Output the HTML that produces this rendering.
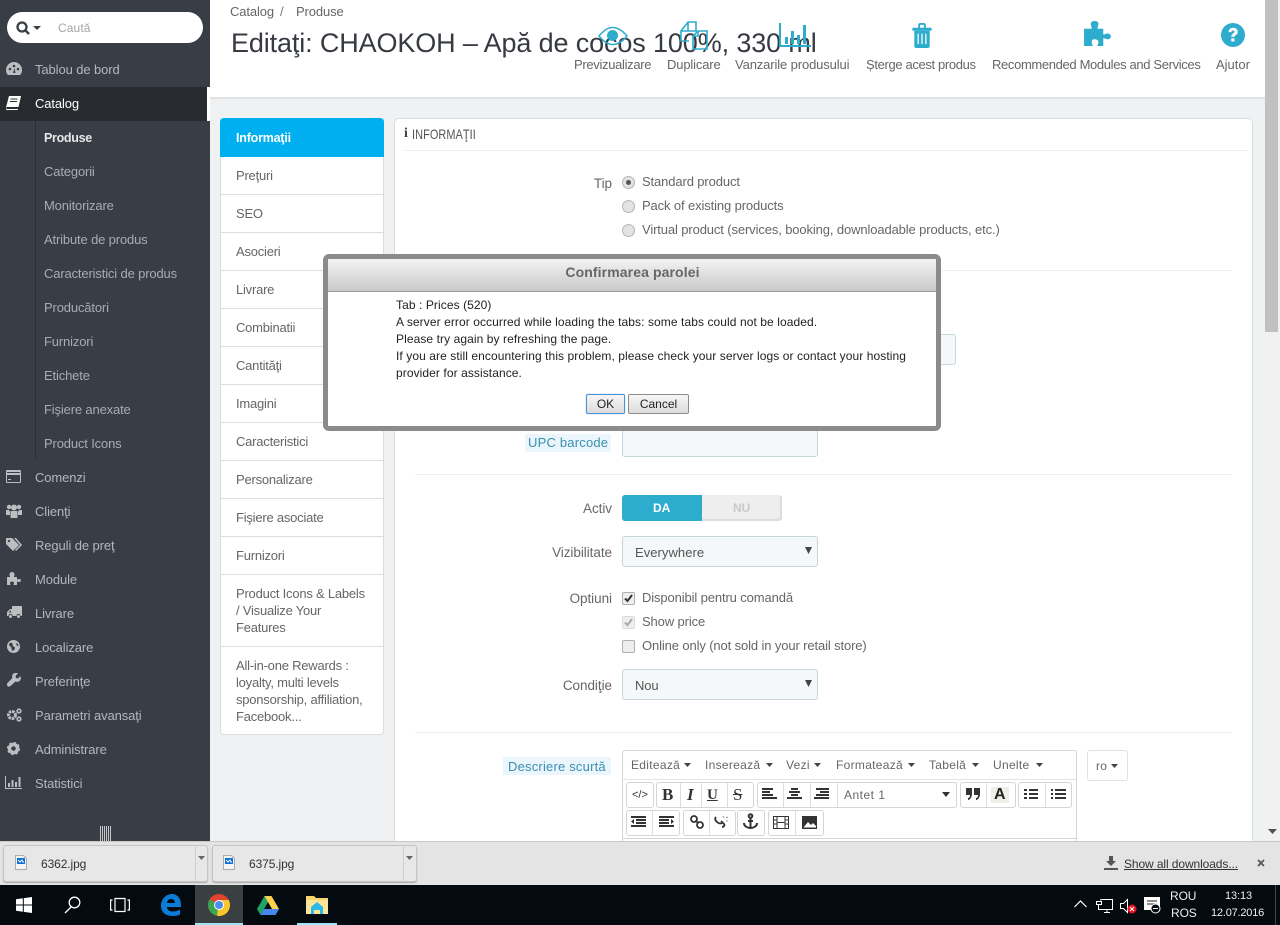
<!DOCTYPE html>
<html lang="ro"><head><meta charset="utf-8"><title>Editați</title>
<style>
html,body{margin:0;padding:0}
body{width:1280px;height:925px;overflow:hidden;position:relative;background:#eff1f2;font:13px/20px "Liberation Sans",sans-serif;color:#555;letter-spacing:-.12px}
div,span,svg{position:absolute}
.t{white-space:nowrap;height:20px}
.s{color:#b4b7bb;left:35px;letter-spacing:-.1px}
.u{color:#a9acb1;left:44px;letter-spacing:-.15px}
.ic{fill:#bcbec2}
.tb{left:236px;color:#666;letter-spacing:-.22px}
.ln{background:#ddd;height:1px}
.lb{color:#666;text-align:right;width:120px;left:492px;font-size:13.5px;letter-spacing:-.05px}
.op{left:642px;color:#666}
.rad{left:622px;width:11px;height:11px;border:1px solid #b5b5b5;border-radius:50%;background:#e3e3e3}
.chk{left:622px;width:11px;height:11px;border:1px solid #b0b0b0;border-radius:2px;background:#eee}
.act{top:55px;color:#666}
.tg{height:24px;border:1px solid #d5d5d5;border-radius:3px;background:#fff}
.sep{width:1px;height:24px;background:#ddd}
.e{font-size:12px;color:#666;letter-spacing:.3px}
.d{color:#222;letter-spacing:.08px;font-size:12px;line-height:17px;left:396px;white-space:nowrap;height:17px}
</style></head><body>

<!-- header -->
<div style="left:210px;top:0;width:1055px;height:99px;background:#fff;border-bottom:2px solid #dfe1e2;box-sizing:border-box"></div>
<div class="t" style="left:230px;top:2px;color:#666">Catalog</div>
<div class="t" style="left:280px;top:2px;color:#777">/</div>
<div class="t" style="left:296px;top:2px;color:#666">Produse</div>
<div class="t" style="left:231px;top:27px;height:32px;font-size:27px;line-height:32px;color:#363a41;letter-spacing:-.13px">Editaţi: CHAOKOH – Apă de cocos 100%, 330 ml</div>

<svg style="left:598px;top:26px" width="30" height="20" viewBox="0 0 30 20"><path d="M1 10C6 4 10 1.500 14.500 1.500S24 4 29 10C24 16 19 18.500 14.500 18.500S6 16 1 10Z" fill="none" stroke="#2eacce" stroke-width="1.600"/><circle cx="14.500" cy="9.500" r="5.500" fill="#2eacce"/></svg>
<svg style="left:680px;top:21px" width="28" height="29" viewBox="0 0 28 29" fill="none" stroke="#2eacce" stroke-width="1.600"><path d="M1 10 8 1h8v9H1v10h8M8 1v9"/><path d="M13 27V15L18 10h9v18H13ZM18 10v5h-5"/></svg>
<svg style="left:779px;top:23px" width="32" height="25" viewBox="0 0 32 25" fill="#2eacce"><path d="M0 0h2v22h30v2H0Z"/><path d="M6 14h3v7H6ZM12 8h3v13h-3ZM18 12h3v9h-3ZM24 2h3v19h-3Z"/></svg>
<svg style="left:911px;top:23px" width="22" height="25" viewBox="0 0 22 26"><path d="M1 5h20v3H1ZM7 5V2c0-1 1-2 2-2h4c1 0 2 1 2 2v3h-2V2H9v3Z" fill="#2eacce"/><path d="M3 8h16v16c0 1-1 2-2 2H5c-1 0-2-1-2-2Z" fill="#2eacce"/><path d="M7 11v11M11 11v11M15 11v11" stroke="#fff" stroke-width="1.300"/></svg>
<svg style="left:1084px;top:21px" width="27" height="25" viewBox="0 0 28 26"><path d="M0 8h8C8 6 7 5 7 3c0-2 2-3 4-3s4 1 4 3c0 2-1 3-1 5h6v6c2 0 3-1 4-1 2 0 4 1 4 3s-2 3-4 3c-1 0-2-1-4-1v8h-6c0-2 1-2 1-4s-2-3-4-3-3 1-3 3 1 2 1 4H0Z" fill="#2eacce"/></svg>
<svg style="left:1221px;top:23px" width="24" height="24" viewBox="0 0 25 25"><circle cx="12.500" cy="12.500" r="12.500" fill="#2eacce"/><path d="M8 9.500C8 6.500 10 5 12.700 5S17.500 6.700 17.500 9.200c0 3.300-3.500 3.300-3.500 5.300h-3.300c0-3.700 3.300-3.700 3.300-5.300 0-.9-.7-1.400-1.500-1.400-1 0-1.600.6-1.800 1.700ZM10.700 16h3.300v3.300h-3.300Z" fill="#fff"/></svg>

<div class="t act" style="left:574px;letter-spacing:-.32px">Previzualizare</div>
<div class="t act" style="left:667px;letter-spacing:-.15px">Duplicare</div>
<div class="t act" style="left:735px;letter-spacing:-.12px">Vanzarile produsului</div>
<div class="t act" style="left:866px;letter-spacing:-.35px">Șterge acest produs</div>
<div class="t act" style="left:992px;letter-spacing:-.35px">Recommended Modules and Services</div>
<div class="t act" style="left:1216px;letter-spacing:0">Ajutor</div>

<!-- sidebar -->
<div style="left:0;top:0;width:210px;height:841px;background:#393d45"></div>
<div style="left:0;top:87px;width:207px;height:34px;background:#282b30"></div>
<div style="left:207px;top:87px;width:3px;height:34px;background:#fff"></div>
<div style="left:35px;top:121px;width:1px;height:339px;background:#2b2e33"></div>
<div style="left:7px;top:12px;width:196px;height:31px;background:#fff;border-radius:16px"></div>
<svg style="left:16px;top:21px" width="26" height="14" viewBox="0 0 26 14"><circle cx="6" cy="6" r="4.500" fill="none" stroke="#3a3e46" stroke-width="2.300"/><path d="M9 9l4 4" stroke="#3a3e46" stroke-width="2.500"/><path d="M17 5h8l-4 4Z" fill="#3a3e46"/></svg>
<div class="t" style="left:58px;top:18px;color:#a5a5a5;font-size:12px;letter-spacing:.1px">Caută</div>

<svg style="left:6px;top:62px" width="16" height="14" viewBox="0 0 16 14"><path class="ic" d="M8 0a8 8 0 0 0-8 8c0 2 .8 4 2 5h12c1.200-1 2-3 2-5a8 8 0 0 0-8-8Z"/><circle cx="4" cy="7" r="1.300" fill="#393d45"/><circle cx="8" cy="4" r="1.300" fill="#393d45"/><circle cx="12" cy="7" r="1.300" fill="#393d45"/><path d="M7 11l1.500-5 1 5Z" fill="#393d45"/></svg>
<div class="t s" style="top:60px">Tablou de bord</div>

<svg style="left:6px;top:96px" width="15" height="14" viewBox="0 0 15 14"><path d="M3 0h12l-2.500 11H1c-1 0-1 2 0 2h11l-.2 1H1c-1 0-1-1-1-2.500Z" fill="#fff"/><path d="M4.500 3h7M4 5.500h7" stroke="#282b30"/></svg>
<div class="t" style="left:35px;top:94px;color:#fff">Catalog</div>

<div class="t u" style="top:128px;color:#e8e8e8;font-weight:bold;font-size:12.500px;letter-spacing:-.3px">Produse</div>
<div class="t u" style="top:162px">Categorii</div>
<div class="t u" style="top:196px">Monitorizare</div>
<div class="t u" style="top:230px">Atribute de produs</div>
<div class="t u" style="top:264px">Caracteristici de produs</div>
<div class="t u" style="top:298px">Producători</div>
<div class="t u" style="top:332px">Furnizori</div>
<div class="t u" style="top:366px">Etichete</div>
<div class="t u" style="top:400px">Fişiere anexate</div>
<div class="t u" style="top:434px">Product Icons</div>

<svg style="left:6px;top:470px" width="15" height="13" viewBox="0 0 15 13"><path class="ic" d="M1 0h13c.6 0 1 .4 1 1v11c0 .6-.4 1-1 1H1c-.6 0-1-.4-1-1V1c0-.6.4-1 1-1Zm0 5v7h13V5ZM1 2v1h13V2ZM2 9h3v1H2Z" fill-rule="evenodd"/></svg>
<div class="t s" style="top:468px">Comenzi</div>
<svg style="left:6px;top:504px" width="16" height="14" viewBox="0 0 16 14"><g class="ic"><circle cx="3" cy="3" r="2.200"/><circle cx="13" cy="3" r="2.200"/><circle cx="8" cy="3.500" r="3"/><path d="M0 6h3l1 2v3H0ZM16 6h-3l-1 2v3h4ZM4.500 7h7V14h-7Z"/></g></svg>
<div class="t s" style="top:502px">Clienţi</div>
<svg style="left:6px;top:538px" width="16" height="14" viewBox="0 0 16 14"><path class="ic" d="M0 0h6l7 7-6 6-7-7Zm8 0h2l6 7-6 6-1-1 5-5Z"/><circle cx="3" cy="3" r="1.100" fill="#393d45"/></svg>
<div class="t s" style="top:536px">Reguli de preţ</div>
<svg style="left:7px;top:572px" width="14" height="13" viewBox="0 0 14 13"><path class="ic" d="M0 5h3c0-1-.5-1.500-.5-2.500S3.500 0 5 0s2.500 1 2.500 2.500S7 4 7 5h3v2.500c1 0 1.200-.5 2-.5s2 .5 2 1.500-1 1.500-2 1.500-1-.5-2-.5V13H6.500c0-1 .5-1 .5-2S6 9.500 5 9.500 3 10 3 11s.5 1 .5 2H0Z"/></svg>
<div class="t s" style="top:570px">Module</div>
<svg style="left:7px;top:606px" width="15" height="13" viewBox="0 0 15 13"><path class="ic" d="M5 0h10v10h-1.500a2 2 0 0 0-4 0H5.500a2 2 0 0 0-4 0H0V6l3-3h2ZM3.500 4.500 1.500 6.500H4V4.500Z"/><circle cx="3.500" cy="10.500" r="1.500" class="ic"/><circle cx="11.500" cy="10.500" r="1.500" class="ic"/></svg>
<div class="t s" style="top:604px">Livrare</div>
<svg style="left:7px;top:640px" width="13" height="13" viewBox="0 0 13 13"><circle class="ic" cx="6.500" cy="6.500" r="6.500"/><path d="M2 4c1-1 2-1.500 3-1 1 1 0 2 1 3s2 1 2 2-1 2-2 3C4 10 5 8 4 7S2 6 2 4ZM9 3l2 1 .5 2-1.500 0Z" fill="#393d45"/></svg>
<div class="t s" style="top:638px">Localizare</div>
<svg style="left:7px;top:673px" width="14" height="14" viewBox="0 0 14 14"><path class="ic" d="M13.500 3 11 5.500 9 5 8.500 3 11 .5C9-.5 7 0 6 1S5 3.500 5.300 5L.5 10c-1 1-.5 2.300 0 3s2 1 3 0L8.500 8.500c1.500.5 3 .5 4.300-.7S14 5 13.500 3Z"/></svg>
<div class="t s" style="top:672px">Preferinţe</div>
<svg style="left:6px;top:708px" width="16" height="14" viewBox="0 0 16 14"><circle cx="6" cy="7" r="3.500" fill="none" stroke="#bcbec2" stroke-width="3" stroke-dasharray="2.500 .8"/><circle cx="13" cy="3" r="1.800" fill="none" stroke="#bcbec2" stroke-width="1.600"/><circle cx="13" cy="11" r="1.800" fill="none" stroke="#bcbec2" stroke-width="1.600"/></svg>
<div class="t s" style="top:706px">Parametri avansaţi</div>
<svg style="left:7px;top:742px" width="13" height="13" viewBox="0 0 13 13"><circle cx="6.500" cy="6.500" r="4" fill="none" stroke="#bcbec2" stroke-width="3.500"/><circle cx="6.500" cy="6.500" r="5.800" fill="none" stroke="#bcbec2" stroke-width="1.600" stroke-dasharray="2.300 2.250"/></svg>
<div class="t s" style="top:740px">Administrare</div>
<svg style="left:5px;top:776px" width="17" height="14" viewBox="0 0 17 14"><path class="ic" d="M0 0h1v12h16v1H0ZM3 7h2v4H3ZM6.500 4h2v7h-2ZM10 6h2v5h-2ZM13.500 1h2v10h-2Z"/></svg>
<div class="t s" style="top:774px">Statistici</div>
<svg style="left:100px;top:826px" width="11" height="15"><path d="M.5 0v15M2.500 0v15M4.500 0v15M6.500 0v15M8.500 0v15M10.500 0v15" stroke="#c6c8cc"/></svg>

<!-- tabs -->
<div style="left:220px;top:118px;width:164px;height:617px;background:#fff;border:1px solid #ddd;border-top:0;box-sizing:border-box;border-radius:0 0 4px 4px"></div>
<div style="left:220px;top:118px;width:164px;height:39px;background:#00aff0;border-radius:4px 4px 0 0"></div>
<div class="t" style="left:236px;top:128px;color:#fff;font-weight:bold;letter-spacing:-.2px;font-size:12.500px">Informaţii</div>
<div class="ln" style="left:221px;top:194px;width:162px"></div>
<div class="ln" style="left:221px;top:232px;width:162px"></div>
<div class="ln" style="left:221px;top:270px;width:162px"></div>
<div class="ln" style="left:221px;top:308px;width:162px"></div>
<div class="ln" style="left:221px;top:346px;width:162px"></div>
<div class="ln" style="left:221px;top:384px;width:162px"></div>
<div class="ln" style="left:221px;top:422px;width:162px"></div>
<div class="ln" style="left:221px;top:460px;width:162px"></div>
<div class="ln" style="left:221px;top:498px;width:162px"></div>
<div class="ln" style="left:221px;top:536px;width:162px"></div>
<div class="ln" style="left:221px;top:574px;width:162px"></div>
<div class="ln" style="left:221px;top:646px;width:162px"></div>
<div class="t tb" style="top:166px">Preţuri</div>
<div class="t tb" style="top:204px">SEO</div>
<div class="t tb" style="top:242px">Asocieri</div>
<div class="t tb" style="top:280px">Livrare</div>
<div class="t tb" style="top:318px">Combinatii</div>
<div class="t tb" style="top:356px">Cantităţi</div>
<div class="t tb" style="top:394px">Imagini</div>
<div class="t tb" style="top:432px">Caracteristici</div>
<div class="t tb" style="top:470px">Personalizare</div>
<div class="t tb" style="top:508px">Fişiere asociate</div>
<div class="t tb" style="top:546px">Furnizori</div>
<div class="t tb" style="top:584px">Product Icons &amp; Labels</div>
<div class="t tb" style="top:601px">/ Visualize Your</div>
<div class="t tb" style="top:618px">Features</div>
<div class="t tb" style="top:656px">All-in-one Rewards :</div>
<div class="t tb" style="top:673px">loyalty, multi levels</div>
<div class="t tb" style="top:690px">sponsorship, affiliation,</div>
<div class="t tb" style="top:707px">Facebook...</div>

<!-- panel -->
<div style="left:394px;top:118px;width:859px;height:740px;background:#fff;border:1px solid #d9dcde;box-sizing:border-box;border-radius:5px 5px 0 0"></div>
<div class="t" style="left:404px;top:124px;font:bold 14px/20px 'Liberation Serif',serif;color:#444">i</div>
<div class="t" style="left:412px;top:124px;font-size:14px;color:#555;letter-spacing:.1px;transform:scaleX(.78);transform-origin:0 50%">INFORMAŢII</div>
<div class="ln" style="left:404px;top:150px;width:844px;background:#eee"></div>

<div class="t lb" style="top:174px">Tip</div>
<div class="rad" style="top:176px"></div><div style="left:626px;top:180px;width:5px;height:5px;border-radius:50%;background:#555"></div>
<div class="rad" style="top:200px"></div>
<div class="rad" style="top:224px"></div>
<div class="t op" style="top:172px">Standard product</div>
<div class="t op" style="top:196px">Pack of existing products</div>
<div class="t op" style="top:220px">Virtual product (services, booking, downloadable products, etc.)</div>
<div class="ln" style="left:415px;top:270px;width:817px;background:#eee"></div>

<div style="left:900px;top:334px;width:56px;height:31px;background:#f5f8f9;border:1px solid #c7d6db;box-sizing:border-box;border-radius:3px"></div>
<div style="left:525px;top:434px;width:86px;height:18px;background:#eaf6fc;border-radius:2px"></div>
<div class="t" style="left:528px;top:433px;color:#3c8fb0;letter-spacing:.2px">UPC barcode</div>
<div style="left:622px;top:428px;width:196px;height:29px;background:#f5f8f9;border:1px solid #c7d6db;box-sizing:border-box;border-radius:3px"></div>
<div class="ln" style="left:415px;top:474px;width:817px;background:#eee"></div>

<div class="t lb" style="top:499px">Activ</div>
<div style="left:622px;top:495px;width:160px;height:26px;background:#eee;border-radius:3px;box-shadow:inset -2px -2px 0 #ddd"></div>
<div style="left:622px;top:495px;width:80px;height:26px;background:#2eacce;border-radius:3px 0 0 3px"></div>
<div class="t" style="left:653px;top:498px;color:#fff;font-weight:bold;font-size:12px;letter-spacing:0">DA</div>
<div class="t" style="left:733px;top:498px;color:#c8c8c8;font-weight:bold;font-size:12px;letter-spacing:0">NU</div>

<div class="t lb" style="top:543px">Vizibilitate</div>
<div style="left:622px;top:536px;width:196px;height:31px;background:#f5f8f9;border:1px solid #c7d6db;box-sizing:border-box;border-radius:3px"></div>
<div class="t" style="left:635px;top:543px;color:#555;letter-spacing:.05px">Everywhere</div>
<svg style="left:805px;top:547px" width="7" height="7"><path d="M0 0h7L3.500 7Z" fill="#444"/></svg>

<div class="t lb" style="top:589px">Optiuni</div>
<div class="chk" style="top:592px"></div>
<svg style="left:623px;top:593px" width="11" height="11"><path d="M2 5.500 4.500 8 9 2" fill="none" stroke="#333" stroke-width="2"/></svg>
<div class="chk" style="top:616px;border-color:#ddd"></div>
<svg style="left:623px;top:617px" width="11" height="11"><path d="M2 5.500 4.500 8 9 2" fill="none" stroke="#aaa" stroke-width="2"/></svg>
<div class="chk" style="top:640px"></div>
<div class="t op" style="top:588px">Disponibil pentru comandă</div>
<div class="t op" style="top:612px">Show price</div>
<div class="t op" style="top:636px">Online only (not sold in your retail store)</div>

<div class="t lb" style="top:676px">Condiţie</div>
<div style="left:622px;top:669px;width:196px;height:31px;background:#f5f8f9;border:1px solid #c7d6db;box-sizing:border-box;border-radius:3px"></div>
<div class="t" style="left:635px;top:676px;color:#555">Nou</div>
<svg style="left:805px;top:680px" width="7" height="7"><path d="M0 0h7L3.500 7Z" fill="#444"/></svg>
<div class="ln" style="left:415px;top:732px;width:817px;background:#eee"></div>

<!-- editor -->
<div style="left:503px;top:757px;width:108px;height:18px;background:#eaf6fc;border-radius:2px"></div>
<div class="t" style="left:508px;top:757px;color:#3c8fb0;letter-spacing:.2px">Descriere scurtă</div>
<div style="left:622px;top:750px;width:455px;height:100px;background:#fff;border:1px solid #d5d5d5;box-sizing:border-box;border-radius:3px 3px 0 0"></div>
<div class="ln" style="left:623px;top:779px;width:453px;background:#e5e5e5"></div>
<div class="ln" style="left:623px;top:838px;width:453px;background:#d5d5d5"></div>
<div class="t e" style="left:631px;top:755px">Editează</div>
<div class="t e" style="left:705px;top:755px">Inserează</div>
<div class="t e" style="left:786px;top:755px">Vezi</div>
<div class="t e" style="left:836px;top:755px">Formatează</div>
<div class="t e" style="left:929px;top:755px">Tabelă</div>
<div class="t e" style="left:993px;top:755px">Unelte</div>
<svg style="left:622px;top:750px" width="430" height="30" fill="#444"><path d="M62 13h7l-3.500 4ZM144 13h7l-3.500 4ZM192 13h7l-3.500 4ZM286 13h7l-3.500 4ZM350 13h7l-3.500 4ZM414 13h7l-3.500 4Z"/></svg>

<div class="tg" style="left:626px;top:782px;width:26px"></div>
<div class="tg" style="left:656px;top:782px;width:96px"></div>
<div class="tg" style="left:757px;top:782px;width:198px"></div>
<div class="tg" style="left:960px;top:782px;width:54px"></div>
<div class="tg" style="left:1018px;top:782px;width:52px"></div>
<div class="tg" style="left:626px;top:810px;width:52px"></div>
<div class="tg" style="left:683px;top:810px;width:51px"></div>
<div class="tg" style="left:737px;top:810px;width:26px"></div>
<div class="tg" style="left:768px;top:810px;width:54px"></div>
<div class="sep" style="left:680px;top:783px"></div><div class="sep" style="left:701px;top:783px"></div><div class="sep" style="left:727px;top:783px"></div>
<div class="sep" style="left:783px;top:783px"></div><div class="sep" style="left:810px;top:783px"></div><div class="sep" style="left:837px;top:783px"></div>
<div class="sep" style="left:986px;top:783px"></div><div class="sep" style="left:1045px;top:783px"></div>
<div class="sep" style="left:652px;top:811px"></div><div class="sep" style="left:709px;top:811px"></div><div class="sep" style="left:795px;top:811px"></div>

<div class="t" style="left:632px;top:785px;font-size:11px;color:#333;letter-spacing:0">&lt;/&gt;</div>
<div class="t" style="left:662px;top:785px;font:bold 17px/20px 'Liberation Serif',serif;color:#333">B</div>
<div class="t" style="left:687px;top:785px;font:italic bold 17px/20px 'Liberation Serif',serif;color:#333">I</div>
<div class="t" style="left:707px;top:785px;font:bold 15px/20px 'Liberation Serif',serif;color:#333;text-decoration:underline">U</div>
<div class="t" style="left:733px;top:785px;font:17px/20px 'Liberation Serif',serif;color:#333;text-decoration:line-through">S</div>
<svg style="left:760px;top:787px" width="72" height="14" stroke="#333" stroke-width="2"><path d="M2 2h11M2 5h8M2 8h11M2 11h15"/><path d="M31 2h7M29 5h11M31 8h7M27 11h15"/><path d="M56 2h13M60 5h9M56 8h13M54 11h15"/></svg>
<div class="t e" style="left:844px;top:785px;letter-spacing:.5px">Antet 1</div>
<svg style="left:942px;top:792px" width="8" height="5"><path d="M0 0h8L4 5Z" fill="#333"/></svg>
<svg style="left:966px;top:788px" width="15" height="13" fill="#333"><path d="M0 0h6v6c0 3-2 6-4 6v-2c1 0 2-1 2-3H0ZM8 0h6v6c0 3-2 6-4 6v-2c1 0 2-1 2-3H8Z"/></svg>
<div style="left:991px;top:787px;width:18px;height:16px;background:#eef0e8"></div>
<div class="t" style="left:994px;top:785px;font-size:16px;font-weight:bold;color:#222;letter-spacing:0">A</div>
<svg style="left:1023px;top:787px" width="46" height="14" stroke="#333" stroke-width="2"><path d="M1 3h3M6 3h9M1 7h3M6 7h9M1 11h3M6 11h9M28 3h2M32 3h11M28 7h2M32 7h11M28 11h2M32 11h11"/></svg>
<svg style="left:630px;top:815px" width="46" height="14" stroke="#333" stroke-width="2"><path d="M1 2h15M6 5h10M6 8h10M1 11h15M29 2h15M29 5h10M29 8h10M29 11h15"/><path d="M4 4v5L1 6.500ZM41 4v5l3-2.500Z" fill="#333" stroke="none"/></svg>
<svg style="left:687px;top:814px" width="44" height="16" fill="none" stroke="#333" stroke-width="1.800"><circle cx="7" cy="5" r="3"/><circle cx="13" cy="11" r="3"/><path d="M8.500 6.500l3 3"/><path d="M29 3c-2 2 0 4 1 5s3 2 5 1M35 13c2 0 3-2 2-3l-3-3" /><path d="M36 2l1 2M39 4l2-1M39 7h2" stroke="#999" stroke-width="1"/></svg>
<svg style="left:743px;top:813px" width="15" height="17" fill="none" stroke="#333" stroke-width="2"><circle cx="7.500" cy="3" r="1.800"/><path d="M7.500 5v10M5 8h5M1 10c0 3 3 5 6.500 5s6.500-2 6.500-5"/></svg>
<svg style="left:773px;top:815px" width="44" height="15"><path d="M.5 1.500h15v12H.5ZM4 1.500v12M12 1.500v12M.5 5h3.500M.5 9h3.500M12 5h3.500M12 9h3.500M4 7.500h8" fill="none" stroke="#333"/><path d="M29 1h15v13H29Z" fill="#333"/><path d="M30.500 12.500 35 7l3 3 2-2 3 3v1.500Z" fill="#fff"/></svg>

<div style="left:1087px;top:750px;width:41px;height:31px;background:#fff;border:1px solid #e2e2e2;box-sizing:border-box;border-radius:3px"></div>
<div class="t e" style="left:1096px;top:756px">ro</div>
<svg style="left:1111px;top:764px" width="7" height="4"><path d="M0 0h7L3.500 4Z" fill="#444"/></svg>

<!-- scrollbar -->
<div style="left:1265px;top:0;width:15px;height:841px;background:#f1f1f1"></div>
<div style="left:1265px;top:0;width:13px;height:332px;background:#c1c1c1"></div>
<svg style="left:1268px;top:829px" width="9" height="6"><path d="M0 0h9L4.500 5Z" fill="#505050"/></svg>

<!-- dialog -->
<div style="left:323px;top:254px;width:618px;height:177px;box-sizing:border-box;background:#fff;border:5px solid #8b8b8b;border-radius:6px"></div>
<div style="left:328px;top:259px;width:608px;height:33px;box-sizing:border-box;background:linear-gradient(#f3f3f3,#c9c9c9);border-bottom:1px solid #9c9c9c"></div>
<div class="t" style="left:328px;width:609px;top:262px;text-align:center;font-weight:bold;font-size:14px;color:#666;letter-spacing:.1px">Confirmarea parolei</div>
<div class="d" style="top:297px">Tab : Prices (520)</div>
<div class="d" style="top:314px">A server error occurred while loading the tabs: some tabs could not be loaded.</div>
<div class="d" style="top:331px">Please try again by refreshing the page.</div>
<div class="d" style="top:348px">If you are still encountering this problem, please check your server logs or contact your hosting</div>
<div class="d" style="top:365px">provider for assistance.</div>
<div style="left:586px;top:394px;width:39px;height:20px;box-sizing:border-box;background:linear-gradient(#f6f6f6,#dcdcdc);border:1px solid #4d90d8;border-radius:2px;box-shadow:0 0 1px #6ba8e8;text-align:center;font-size:12px;line-height:18px;color:#222;letter-spacing:0">OK</div>
<div style="left:628px;top:394px;width:61px;height:20px;box-sizing:border-box;background:linear-gradient(#f6f6f6,#dcdcdc);border:1px solid #8c8c8c;border-radius:2px;text-align:center;font-size:12px;line-height:18px;color:#222;letter-spacing:0">Cancel</div>

<!-- download bar -->
<div style="left:0;top:841px;width:1280px;height:44px;background:#e4e4e4;border-top:1px solid #c8c8c8;box-sizing:border-box"></div>
<div style="left:3px;top:845px;width:205px;height:37px;box-sizing:border-box;background:#e7e7e7;border:1px solid #c4c4c4;border-radius:3px;box-shadow:0 1px 1px #aaa"></div>
<div style="left:195px;top:846px;width:1px;height:35px;background:#cfcfcf"></div>
<div style="left:212px;top:845px;width:205px;height:37px;box-sizing:border-box;background:#e7e7e7;border:1px solid #c4c4c4;border-radius:3px;box-shadow:0 1px 1px #aaa"></div>
<div style="left:403px;top:846px;width:1px;height:35px;background:#cfcfcf"></div>
<svg style="left:15px;top:855px" width="12" height="15"><path d="M.5.500h8l3 3v11H.5Z" fill="#f5f5f5" stroke="#aaa"/><path d="M2 3h8v6H2Z" fill="#0a6fd6"/><path d="M3 5l2 2 2-2 1 2h1" stroke="#fff" fill="none"/></svg>
<svg style="left:223px;top:855px" width="12" height="15"><path d="M.5.500h8l3 3v11H.5Z" fill="#f5f5f5" stroke="#aaa"/><path d="M2 3h8v6H2Z" fill="#0a6fd6"/><path d="M3 5l2 2 2-2 1 2h1" stroke="#fff" fill="none"/></svg>
<div class="t" style="left:41px;top:854px;color:#333;font-size:12px;letter-spacing:-.1px">6362.jpg</div>
<div class="t" style="left:249px;top:854px;color:#333;font-size:12px;letter-spacing:-.1px">6375.jpg</div>
<svg style="left:198px;top:856px" width="7" height="4"><path d="M0 0h7L3.500 4Z" fill="#666"/></svg>
<svg style="left:406px;top:856px" width="7" height="4"><path d="M0 0h7L3.500 4Z" fill="#666"/></svg>
<svg style="left:1104px;top:856px" width="14" height="14"><path d="M5 0h4v5h3L7 10 2 5h3ZM0 12h14v2H0Z" fill="#555"/></svg>
<div class="t" style="left:1124px;top:854px;color:#333;font-size:12px;letter-spacing:-.1px;text-decoration:underline">Show all downloads...</div>
<svg style="left:1257px;top:859px" width="8" height="8"><path d="M1 1l6 6M7 1 1 7" stroke="#555" stroke-width="1.800"/></svg>

<!-- taskbar -->
<div style="left:0;top:885px;width:1280px;height:40px;background:#030a10"></div>
<div style="left:195px;top:885px;width:48px;height:40px;background:#3a4042"></div>
<div style="left:195px;top:923px;width:48px;height:2px;background:#9fe6f5"></div>
<div style="left:297px;top:923px;width:40px;height:2px;background:#9fe6f5"></div>
<svg style="left:16px;top:897px" width="16" height="16"><path d="M0 2.300 6.800 1.300V7.500H0ZM7.800 1.100 16 0V7.500H7.800ZM0 8.500H6.800V14.700L0 13.700ZM7.800 8.500H16V16L7.800 14.900Z" fill="#fff"/></svg>
<svg style="left:64px;top:896px" width="17" height="18" fill="none" stroke="#fff" stroke-width="1.300"><circle cx="10.500" cy="6.500" r="5.300"/><path d="M7 11 1 17"/></svg>
<svg style="left:110px;top:897px" width="20" height="16" fill="none" stroke="#fff" stroke-width="1.200"><path d="M5 1.500h10v13H5ZM2.500 3H.6v10h1.900M17.500 3h1.900v10h-1.900"/></svg>
<svg style="left:160px;top:894px" width="21" height="22"><path d="M1 12C1 5 6 0 12 0c5 0 9 4 9 11v2H7c.2 3 2.500 4.500 6 4.500 2.500 0 5-.7 7-2v5c-2 1-4 1.500-7 1.500C5 22 1 18 1 12Zm6-3h8c0-2-1.500-4-4-4S7.300 7 7 9Z" fill="#0c7bd8" fill-rule="evenodd"/></svg>
<svg style="left:208px;top:894px" width="22" height="22" viewBox="0 0 22 22"><circle cx="11" cy="11" r="11" fill="#e0432f"/><path d="M11 11 1.500 5.500A11 11 0 0 0 9 21.800Z" fill="#3ba550"/><path d="M11 6h9.800A11 11 0 0 1 9 21.800Z" fill="#fbc52d"/><circle cx="11" cy="11" r="5" fill="#fff"/><circle cx="11" cy="11" r="4" fill="#4a8ef0"/></svg>
<svg style="left:257px;top:896px" width="22" height="19" viewBox="0 0 22 19"><path d="M7.500 0h7L7 13 3.500 19 0 13Z" fill="#1fa463"/><path d="M7.500 0h7L22 13h-7Z" fill="#ffd04b"/><path d="M3.500 19 7 13h15l-3.500 6Z" fill="#4687f4"/></svg>
<svg style="left:306px;top:896px" width="22" height="18" viewBox="0 0 22 18"><path d="M0 0h8l2 2h12v16H0Z" fill="#f6d56b"/><path d="M0 4h22v14H0Z" fill="#fde59a"/><path d="M5 11 11 6l6 5v7h-3v-4H8v4H5Z" fill="#2db8ea"/></svg>

<svg style="left:1074px;top:900px" width="13" height="8" fill="none" stroke="#fff" stroke-width="1.200"><path d="M.5 7 6.500 1l6 6"/></svg>
<svg style="left:1096px;top:898px" width="17" height="16" fill="none" stroke="#fff"><path d="M4.500 1.500h12v10h-12M8 14.500h6M11 11.500v3M4.500 1.500v1M.5 3.500h5v3h-5ZM2.500 6.500v5h5"/></svg>
<svg style="left:1120px;top:898px" width="17" height="16"><path d="M.5 5.500h3l4-4v13l-4-4h-3Z" fill="none" stroke="#fff"/><circle cx="12" cy="11" r="4.500" fill="#e81123"/><path d="M10 9l4 4M14 9l-4 4" stroke="#fff"/></svg>
<svg style="left:1144px;top:897px" width="17" height="17"><path d="M0 0h16v13H0Z" fill="#fff"/><path d="M3 4h10M3 7h10" stroke="#222"/><circle cx="11.500" cy="11.500" r="4.500" fill="#030a10" stroke="#fff"/><path d="M9 11.500h5" stroke="#fff"/></svg>
<div class="t" style="left:1170px;top:886px;color:#eee;font-size:12px;letter-spacing:-.1px">ROU</div>
<div class="t" style="left:1171px;top:903px;color:#eee;font-size:12px;letter-spacing:-.1px">ROS</div>
<div class="t" style="left:1225px;top:886px;color:#eee;font-size:11px;letter-spacing:-.1px">13:13</div>
<div class="t" style="left:1211px;top:903px;color:#eee;font-size:11px;letter-spacing:-.2px">12.07.2016</div>
<div style="left:1275px;top:885px;width:1px;height:40px;background:#444"></div>
</body></html>
